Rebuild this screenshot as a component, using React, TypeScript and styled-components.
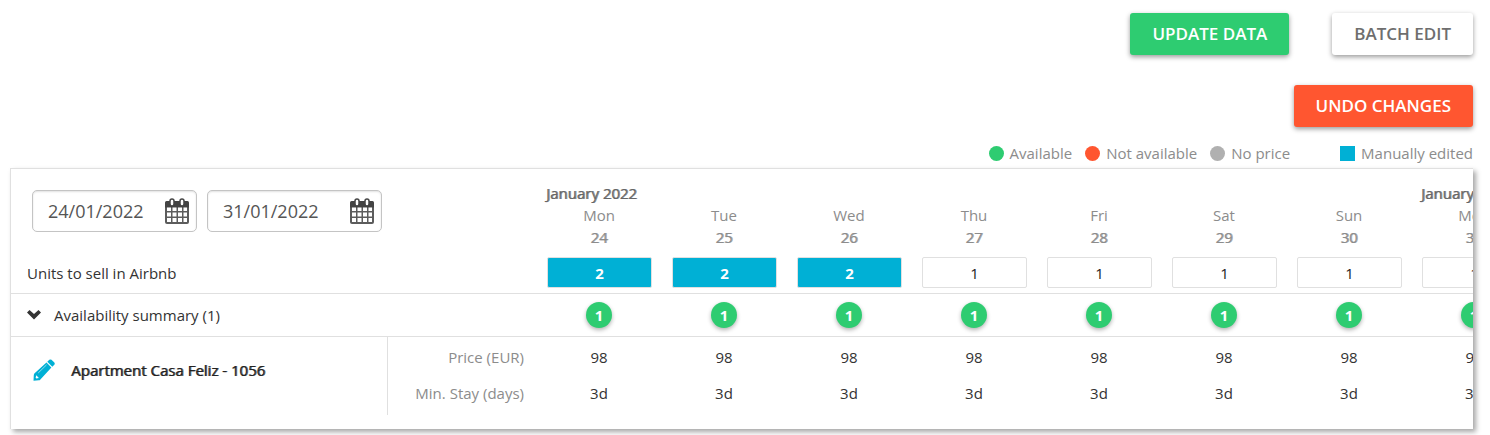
import React, { useState } from "react";
import styled, { createGlobalStyle, css } from "styled-components";

const GlobalStyle = createGlobalStyle`
  * { box-sizing: border-box; }
  body {
    margin: 0;
    background: #fff;
    color: #333;
    font-family: "Open Sans", "Noto Sans", sans-serif;
    font-size: 15px;
    line-height: 22px;
  }
  button, input { font: inherit; color: inherit; }
`;

const strong = css`
  font-weight: 400;
  text-shadow: 1px 0 color-mix(in srgb, currentColor 75%, transparent);
`;

const Page = styled.main`
  padding: 13px 17px 6px 10px;
`;

const Actions = styled.div`
  display: flex;
  flex-direction: column;
  align-items: flex-end;
  gap: 30px;
`;

const ActionRow = styled.div`
  display: flex;
  gap: 43px;
`;

const tones = {
  green: { background: "#2ecc71", color: "#fff" },
  orange: { background: "#ff5630", color: "#fff" },
  plain: { background: "#fff", color: "#6e6e6e" },
};

const ActionButton = styled.button<{ $tone: keyof typeof tones }>`
  height: 42px;
  padding: 0 22px;
  border: 0;
  border-radius: 3px;
  background: ${(p) => tones[p.$tone].background};
  color: ${(p) => tones[p.$tone].color};
  font-size: 17px;
  font-weight: 600;
  text-transform: uppercase;
  white-space: nowrap;
  box-shadow: 0 2px 5px rgba(0, 0, 0, 0.4);
  cursor: pointer;
`;

const Legend = styled.ul`
  display: flex;
  justify-content: flex-end;
  gap: 13px;
  margin: 15px 0 0;
  padding: 0;
  list-style: none;
  color: #8c8c8c;
`;

const LegendItem = styled.li<{ $color: string; $square?: boolean }>`
  display: flex;
  align-items: center;
  gap: 6px;
  margin-left: ${(p) => (p.$square ? "37px" : "0")};

  &::before {
    content: "";
    width: 15px;
    height: 15px;
    border-radius: ${(p) => (p.$square ? "0" : "50%")};
    background: ${(p) => p.$color};
  }
`;

const Panel = styled.section`
  margin-top: 4px;
  padding-bottom: 14px;
  overflow: hidden;
  border-top: 1px solid #e0e0e0;
  border-left: 1px solid #e0e0e0;
  box-shadow: 3px 3px 5px rgba(0, 0, 0, 0.35);
`;

const Calendar = styled.table`
  width: 1526px;
  table-layout: fixed;
  border-collapse: collapse;

  th, td { padding: 0; font-weight: inherit; text-align: center; }
  tbody td { padding-right: 1px; }
`;

const Col = styled.col<{ $width: number }>`
  width: ${(p) => p.$width}px;
`;

const HeadRow = styled.tr`
  height: 84px;
`;

const Row = styled.tr<{ $height: number; $ruled?: boolean }>`
  height: ${(p) => p.$height}px;
  border-bottom: ${(p) => (p.$ruled ? "1px solid #e0e0e0" : "0")};
`;

const Dates = styled.div`
  display: flex;
  gap: 10px;
  padding-left: 21px;
`;

const DateField = styled.label<{ $width: number }>`
  display: flex;
  align-items: center;
  width: ${(p) => p.$width}px;
  height: 42px;
  padding: 0 7px 0 15px;
  border: 1px solid #c4c4c4;
  border-radius: 5px;
  box-shadow: inset 0 1px 2px rgba(0, 0, 0, 0.12);
  color: #555;
`;

const DateInput = styled.input`
  flex: 1;
  min-width: 0;
  padding: 0;
  border: 0;
  outline: 0;
  background: transparent;
  font-size: 18px;
`;

const DayHead = styled.th`
  color: #8c8c8c;
`;

const DayLabel = styled.div`
  padding: 7px 1px 0 0;
`;

const Month = styled.div`
  height: 22px;
  padding-left: 9px;
  color: #666;
  ${strong}
  text-align: left;
  white-space: nowrap;
`;

const DayNumber = styled.div`
  ${strong}
`;

const RowTitle = styled.div`
  display: flex;
  align-items: center;
  padding-left: 16px;
`;

const UnitsInput = styled.input<{ $edited: boolean }>`
  display: block;
  width: 105px;
  height: 31px;
  margin: 0 0 0 10px;
  padding: 0;
  border: 1px solid #e0e0e0;
  border-radius: 2px;
  background: ${(p) => (p.$edited ? "#00b0d5" : "#fff")};
  color: ${(p) => (p.$edited ? "#fff" : "#222")};
  font-weight: ${(p) => (p.$edited ? 700 : 400)};
  text-align: center;
  outline: 0;
`;

const Toggle = styled.button`
  display: flex;
  align-items: center;
  gap: 13px;
  padding: 0;
  border: 0;
  background: none;
  cursor: pointer;
`;

const Badge = styled.span`
  display: block;
  width: 26px;
  height: 26px;
  margin: 0 auto;
  border-radius: 50%;
  background: #2ecc71;
  color: #fff;
  font-weight: 700;
  line-height: 26px;
  box-shadow: 0 2px 4px rgba(0, 0, 0, 0.3);
`;

const Unit = styled.div`
  display: flex;
  align-items: center;
  gap: 16px;
  height: 78px;
  padding: 0 0 12px 22px;
  border-right: 1px solid #e0e0e0;
  color: #222;
  ${strong}
`;

const IconButton = styled.button`
  display: flex;
  padding: 0;
  border: 0;
  background: none;
  cursor: pointer;
`;

const Label = styled.div`
  padding-right: 13px;
  color: #8c8c8c;
  text-align: right;
`;

const StayValue = styled.div`
  padding-bottom: 6px;
`;

const CalendarIcon = () => (
  <svg width="24" height="26" viewBox="0 0 24 26" aria-hidden="true">
    <rect x="0" y="4" width="24" height="22" rx="2" fill="#5c5c5c" />
    <path d="M0 9.500V4.500Q0 3 1.500 3H22.500Q24 3 24 4.500V9.500Z" fill="#444" />
    <path
      d="M2 9.500h4v3.500H2zM7.500 9.500h4v3.500h-4zM13 9.500h4v3.500h-4zM18.500 9.500h3.500v3.500h-3.500zM2 14.500h4v4H2zM7.500 14.500h4v4h-4zM13 14.500h4v4h-4zM18.500 14.500h3.500v4h-3.500zM2 20h4v4H2zM7.500 20h4v4h-4zM13 20h4v4h-4zM18.500 20h3.500v4h-3.500z"
      fill="#fff"
    />
    <rect x="5" y="1" width="4" height="7" rx="2" fill="#fff" stroke="#444" strokeWidth="1.500" />
    <rect x="15" y="1" width="4" height="7" rx="2" fill="#fff" stroke="#444" strokeWidth="1.500" />
  </svg>
);

const ChevronIcon = () => (
  <svg width="14" height="10" viewBox="0 0 14 10" aria-hidden="true">
    <path d="M0 2.500 2.500 0 7 4 11.500 0 14 2.500 7 9.500Z" fill="#333" />
  </svg>
);

const PencilIcon = () => (
  <svg width="22" height="22" viewBox="0 0 22 22" aria-hidden="true">
    <path d="M14.300 2.800 16.300.8Q17.300 0 18.500.8L21.300 3.600Q22.200 4.600 21.300 5.700L19.300 7.700Z" fill="#00b0d5" />
    <path d="M13.500 3.600 18.400 8.600 7.400 20.400Q6.800 21.200 5.800 21.300L.5 21.800.8 16Q.9 15 1.600 14.300Z" fill="#00b0d5" />
    <path d="M5.200 14 13.600 5.800" stroke="#8fdcec" strokeWidth="1" fill="none" />
    <path d="M3.300 16.300 5.900 18.900 3.400 19.600 2.600 18.700Z" fill="#fff" />
  </svg>
);

type Day = { weekday: string; date: number; month?: string; units: number; available: number; price: number; stay: string };

const days: Day[] = [
  { weekday: "Mon", date: 24, month: "January 2022", units: 2, available: 1, price: 98, stay: "3d" },
  { weekday: "Tue", date: 25, units: 2, available: 1, price: 98, stay: "3d" },
  { weekday: "Wed", date: 26, units: 2, available: 1, price: 98, stay: "3d" },
  { weekday: "Thu", date: 27, units: 1, available: 1, price: 98, stay: "3d" },
  { weekday: "Fri", date: 28, units: 1, available: 1, price: 98, stay: "3d" },
  { weekday: "Sat", date: 29, units: 1, available: 1, price: 98, stay: "3d" },
  { weekday: "Sun", date: 30, units: 1, available: 1, price: 98, stay: "3d" },
  { weekday: "Mon", date: 31, month: "January 2022", units: 1, available: 1, price: 98, stay: "3d" },
];

export default function App() {
  const [from, setFrom] = useState("24/01/2022");
  const [to, setTo] = useState("31/01/2022");
  const [units, setUnits] = useState(days.map((d) => String(d.units)));

  return (
    <Page>
      <GlobalStyle />
      <Actions>
        <ActionRow>
          <ActionButton $tone="green">Update data</ActionButton>
          <ActionButton $tone="plain">Batch edit</ActionButton>
        </ActionRow>
        <ActionButton $tone="orange">Undo changes</ActionButton>
      </Actions>
      <Legend>
        <LegendItem $color="#2ecc71">Available</LegendItem>
        <LegendItem $color="#ff5630">Not available</LegendItem>
        <LegendItem $color="#b0b0b0">No price</LegendItem>
        <LegendItem $color="#00b0d5" $square>Manually edited</LegendItem>
      </Legend>
      <Panel>
        <Calendar>
          <colgroup>
            <Col $width={377} />
            <Col $width={149} />
            {days.map((d) => <Col key={d.date} $width={125} />)}
          </colgroup>
          <thead>
            <HeadRow>
              <td colSpan={2}>
                <Dates>
                  <DateField $width={165}>
                    <DateInput aria-label="From" value={from} onChange={(e) => setFrom(e.target.value)} />
                    <CalendarIcon />
                  </DateField>
                  <DateField $width={175}>
                    <DateInput aria-label="To" value={to} onChange={(e) => setTo(e.target.value)} />
                    <CalendarIcon />
                  </DateField>
                </Dates>
              </td>
              {days.map((d) => (
                <DayHead key={d.date} scope="col">
                  <DayLabel>
                    <Month>{d.month}</Month>
                    <div>{d.weekday}</div>
                    <DayNumber>{d.date}</DayNumber>
                  </DayLabel>
                </DayHead>
              ))}
            </HeadRow>
          </thead>
          <tbody>
            <Row $height={40} $ruled>
              <th scope="row" colSpan={2}><RowTitle>Units to sell in Airbnb</RowTitle></th>
              {days.map((d, i) => (
                <td key={d.date}>
                  <UnitsInput
                    aria-label={`Units to sell on ${d.weekday} ${d.date}`}
                    $edited={d.units > 1}
                    value={units[i]}
                    onChange={(e) => setUnits(units.map((u, j) => (j === i ? e.target.value : u)))}
                  />
                </td>
              ))}
            </Row>
            <Row $height={43} $ruled>
              <th scope="row" colSpan={2}>
                <RowTitle>
                  <Toggle aria-expanded="true"><ChevronIcon />Availability summary (1)</Toggle>
                </RowTitle>
              </th>
              {days.map((d) => <td key={d.date}><Badge>{d.available}</Badge></td>)}
            </Row>
            <Row $height={41}>
              <th scope="rowgroup" rowSpan={2}>
                <Unit>
                  <IconButton aria-label="Edit apartment"><PencilIcon /></IconButton>
                  Apartment Casa Feliz - 1056
                </Unit>
              </th>
              <th scope="row"><Label>Price (EUR)</Label></th>
              {days.map((d) => <td key={d.date}>{d.price}</td>)}
            </Row>
            <Row $height={37}>
              <th scope="row"><StayValue><Label>Min. Stay (days)</Label></StayValue></th>
              {days.map((d) => <td key={d.date}><StayValue>{d.stay}</StayValue></td>)}
            </Row>
          </tbody>
        </Calendar>
      </Panel>
    </Page>
  );
}
